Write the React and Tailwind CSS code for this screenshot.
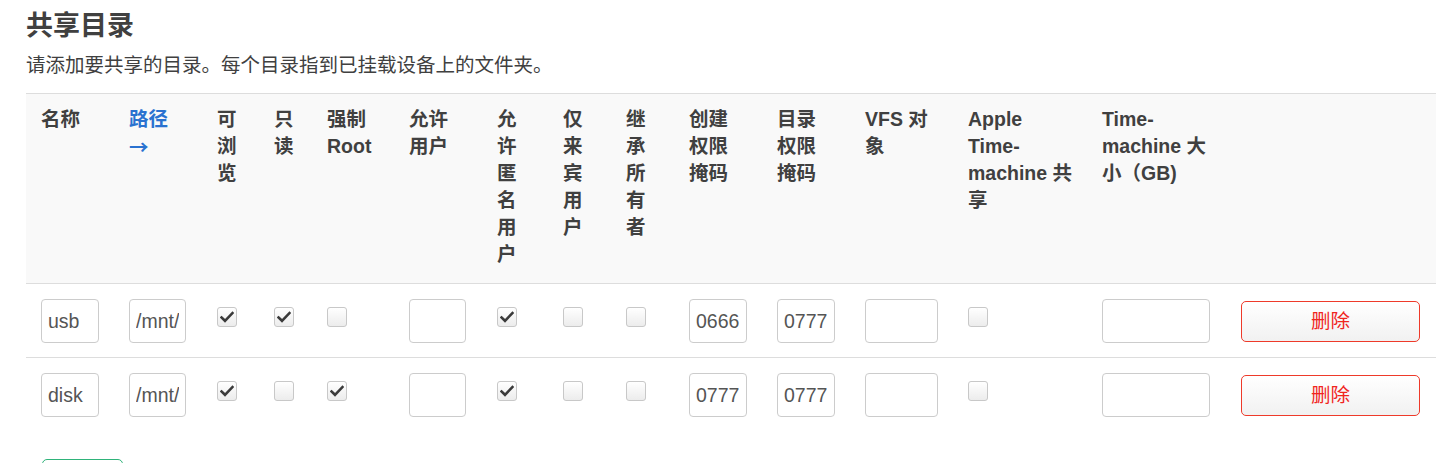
import React from "react";

const FONT = { fontFamily: '"Liberation Sans", Arial, "Noto Sans CJK SC", sans-serif' };

function Check({ on }) {
  return (
    <span className="mt-[8px] flex h-[20px] w-[20px] items-center justify-center rounded-[3px] border border-[#c8c8c8] bg-gradient-to-b from-white to-[#ececec]">
      {on && (
        <svg width="14" height="12" viewBox="0 0 14 12">
          <path d="M1.5 6.5 L5 9.8 L12.5 2" fill="none" stroke="#3a3a3a" strokeWidth="2.6" strokeLinecap="square" />
        </svg>
      )}
    </span>
  );
}

function Field({ w, value = "" }) {
  return (
    <input
      defaultValue={value}
      style={FONT}
      className={`${w} block h-[44px] rounded-[4px] border border-[#cccccc] bg-white px-[6px] text-[19.5px] text-[#555] outline-none`}
    />
  );
}

const headers = [
  { t: "名称" },
  { t: "路径", arrow: true, link: true },
  { t: "可浏览" },
  { t: "只读" },
  { t: "强制 Root" },
  { t: "允许用户" },
  { t: "允许匿名用户" },
  { t: "仅来宾用户" },
  { t: "继承所有者" },
  { t: "创建权限掩码" },
  { t: "目录权限掩码" },
  { t: "VFS 对象" },
  { t: "Apple Time-machine 共享", pr: true },
  { t: "Time-machine 大小（GB)" },
  { t: "" },
];

const widths = [88, 88, 57, 53, 82, 88, 66, 63, 63, 88, 88, 103, 134, 139, 210];

const rows = [
  { name: "usb", path: "/mnt/usb", browse: true, ro: true, root: false, guest: true, create: "0666", dir: "0777" },
  { name: "disk", path: "/mnt/disk", browse: true, ro: false, root: true, guest: true, create: "0777", dir: "0777" },
];

export default function App() {
  return (
    <div style={FONT} className="w-[1441px] bg-white pl-[26px] pr-[5px] pt-[8px] text-[#404040]">
      <h2 className="text-[27px] font-bold leading-[36px] text-[#404040]">共享目录</h2>
      <p className="mt-[8px] text-[19.5px] leading-[27px]">请添加要共享的目录。每个目录指到已挂载设备上的文件夹。</p>
      <table className="mt-[14px] w-[1410px] table-fixed border-collapse">
        <colgroup>
          {widths.map((w, i) => (
            <col key={i} style={{ width: w }} />
          ))}
        </colgroup>
        <thead>
          <tr className="border-t border-b border-[#dddddd] bg-[#f9f9f9]">
            {headers.map((h, i) => (
              <th
                key={i}
                className={`pl-[15px] ${h.pr ? "pr-[10px]" : "pr-[15px]"} pt-[12px] pb-[15px] text-left align-top text-[19.5px] font-bold leading-[27px] ${h.link ? "text-[#2a72d0]" : "text-[#404040]"}`}
              >
                {h.t}
                {h.arrow && (
                  <>
                    {" "}
                    <span style={{ fontFamily: '"Noto Sans CJK SC", sans-serif' }} className="font-bold">→</span>
                  </>
                )}
              </th>
            ))}
          </tr>
        </thead>
        <tbody>
          {rows.map((r, i) => (
            <tr key={i} className={i === 0 ? "border-b border-[#dddddd]" : ""}>
              <td className="px-[15px] pt-[15px] pb-[14px] align-top"><Field w="w-[58px]" value={r.name} /></td>
              <td className="px-[15px] pt-[15px] pb-[14px] align-top"><Field w="w-[57px]" value={r.path} /></td>
              <td className="px-[15px] pt-[15px] pb-[14px] align-top"><Check on={r.browse} /></td>
              <td className="px-[15px] pt-[15px] pb-[14px] align-top"><Check on={r.ro} /></td>
              <td className="px-[15px] pt-[15px] pb-[14px] align-top"><Check on={r.root} /></td>
              <td className="px-[15px] pt-[15px] pb-[14px] align-top"><Field w="w-[57px]" /></td>
              <td className="px-[15px] pt-[15px] pb-[14px] align-top"><Check on={r.guest} /></td>
              <td className="px-[15px] pt-[15px] pb-[14px] align-top"><Check on={false} /></td>
              <td className="px-[15px] pt-[15px] pb-[14px] align-top"><Check on={false} /></td>
              <td className="px-[15px] pt-[15px] pb-[14px] align-top"><Field w="w-[58px]" value={r.create} /></td>
              <td className="px-[15px] pt-[15px] pb-[14px] align-top"><Field w="w-[58px]" value={r.dir} /></td>
              <td className="px-[15px] pt-[15px] pb-[14px] align-top"><Field w="w-[73px]" /></td>
              <td className="px-[15px] pt-[15px] pb-[14px] align-top"><Check on={false} /></td>
              <td className="px-[15px] pt-[15px] pb-[14px] align-top"><Field w="w-[108px]" /></td>
              <td className="px-[15px] pt-[15px] pb-[14px] align-top">
                <button className="mt-[2px] flex h-[41px] w-[179px] items-center justify-center rounded-[5px] border border-[#ee3a2a] bg-gradient-to-b from-white to-[#f1f1f1] text-[19.5px] text-[#f0261e]">
                  删除
                </button>
              </td>
            </tr>
          ))}
        </tbody>
      </table>
      <div className="pl-[16px] pt-[28px]">
        <button className="flex h-[36px] w-[81px] items-center justify-center rounded-[5px] border border-[#2fb37a] bg-white text-[19.5px] text-[#2fb37a]">
          添加
        </button>
      </div>
    </div>
  );
}
